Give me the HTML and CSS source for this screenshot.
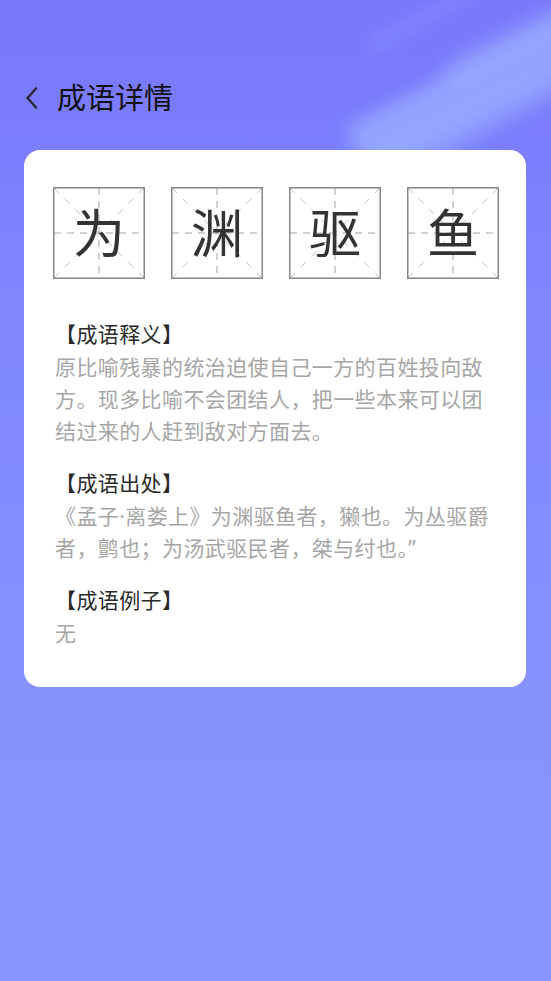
FILE: index.html
```html
<!DOCTYPE html>
<html lang="zh-CN">
<head>
    <meta charset="UTF-8">
    <meta name="viewport" content="width=device-width, initial-scale=1.0">
    <title>成语详情</title>
    <link rel="stylesheet" href="styles.css">
</head>
<body>
    <div class="screen">
        <!-- decorative light shapes in the top right -->
        <div class="glow glow-a"></div>
        <div class="glow glow-b"></div>
        <div class="glow glow-c"></div>
        <div class="glow glow-d"></div>

        <div class="page">
            <div class="header">
                <svg class="back" width="14" height="24" viewBox="0 0 14 24">
                    <polyline points="11,2.5 2.5,12 11,21.5" fill="none" stroke="#2b2b3a" stroke-width="2.6" stroke-linecap="round" stroke-linejoin="round"/>
                </svg>
                <h1 class="title">成语详情</h1>
            </div>

            <div class="card">
                <div class="chars">
                    <div class="cell"><span>为</span></div>
                    <div class="cell"><span>渊</span></div>
                    <div class="cell"><span>驱</span></div>
                    <div class="cell"><span>鱼</span></div>
                </div>

                <div class="section">
                    <h3>【成语释义】</h3>
                    <p>原比喻残暴的统治迫使自己一方的百姓投向敌方。现多比喻不会团结人，把一些本来可以团结过来的人赶到敌对方面去。</p>
                </div>

                <div class="section">
                    <h3>【成语出处】</h3>
                    <p>《孟子·离娄上》为渊驱鱼者，獭也。为丛驱爵者，鹯也；为汤武驱民者，桀与纣也。”</p>
                </div>

                <div class="section">
                    <h3>【成语例子】</h3>
                    <p>无</p>
                </div>
            </div>
        </div>
    </div>

    <script>
        // Draw the practice grid (米字格) inside each character cell
        var grid =
            '<svg class="grid" width="92" height="92" viewBox="0 0 92 92">' +
            '<line x1="1" y1="1" x2="91" y2="91" stroke="#c4c4c8" stroke-width="1" stroke-dasharray="7 8"/>' +
            '<line x1="91" y1="1" x2="1" y2="91" stroke="#c4c4c8" stroke-width="1" stroke-dasharray="7 8"/>' +
            '<line x1="46" y1="1" x2="46" y2="91" stroke="#a4a4aa" stroke-width="1" stroke-dasharray="7 6"/>' +
            '<line x1="1" y1="46" x2="91" y2="46" stroke="#a4a4aa" stroke-width="1" stroke-dasharray="7 6"/>' +
            '<rect x="0.75" y="0.75" width="90.5" height="90.5" fill="none" stroke="#85858c" stroke-width="1.5"/>' +
            '</svg>';
        document.querySelectorAll('.cell').forEach(function (cell) {
            cell.insertAdjacentHTML('afterbegin', grid);
        });
    </script>
</body>
</html>
```

FILE: styles.css
```css
html, body {
    margin: 0;
    padding: 0;
}
body {
    font-family: "Noto Sans", "Noto Sans CJK SC", sans-serif;
}
.screen {
    position: relative;
    width: 551px;
    height: 981px;
    overflow: hidden;
    background: linear-gradient(180deg, #7876fb 0%, #7f86fe 30%, #8792ff 70%, #8893ff 100%);
}
.glow {
    position: absolute;
    background: #a8c4ff;
    filter: blur(9px);
    transform: rotate(-28deg);
}
.glow-a {
    left: 340px;
    top: 60px;
    width: 280px;
    height: 50px;
    opacity: 0.55;
}
.glow-b {
    left: 360px;
    top: 12px;
    width: 130px;
    height: 10px;
    opacity: 0.3;
}
.glow-c {
    left: 350px;
    top: 110px;
    width: 240px;
    height: 30px;
    opacity: 0.4;
}
.glow-d {
    left: 440px;
    top: 30px;
    width: 130px;
    height: 30px;
    opacity: 0.25;
}
.page {
    position: relative;
}
.header {
    display: flex;
    align-items: center;
    height: 50px;
    padding: 73px 0 0 25px;
}
.back {
    display: block;
}
.title {
    margin: 0 0 0 18px;
    font-size: 29px;
    font-weight: normal;
    color: #111;
    line-height: 50px;
}
.card {
    margin: 27px 25px 0 24px;
    background: #fff;
    border-radius: 16px;
    padding: 37px 31px 38px 31px;
}
.chars {
    display: grid;
    grid-template-columns: repeat(4, 92px);
    gap: 26px;
    margin: 0 0 39px -2px;
}
.cell {
    position: relative;
    width: 92px;
    height: 92px;
    display: flex;
    align-items: center;
    justify-content: center;
}
.cell .grid {
    position: absolute;
    left: 0;
    top: 0;
}
.cell span {
    position: relative;
    font-size: 52px;
    color: #333;
    line-height: 1;
}
.section {
    margin-bottom: 20px;
}
.section:last-child {
    margin-bottom: 0;
}
.section h3 {
    margin: 0 0 1px 0;
    font-size: 21px;
    font-weight: normal;
    color: #2a2a2a;
    line-height: 32px;
    letter-spacing: 0.4px;
}
.section p {
    margin: 0;
    font-size: 21px;
    color: #a6a6a6;
    line-height: 32px;
    letter-spacing: 0.4px;
}
```
